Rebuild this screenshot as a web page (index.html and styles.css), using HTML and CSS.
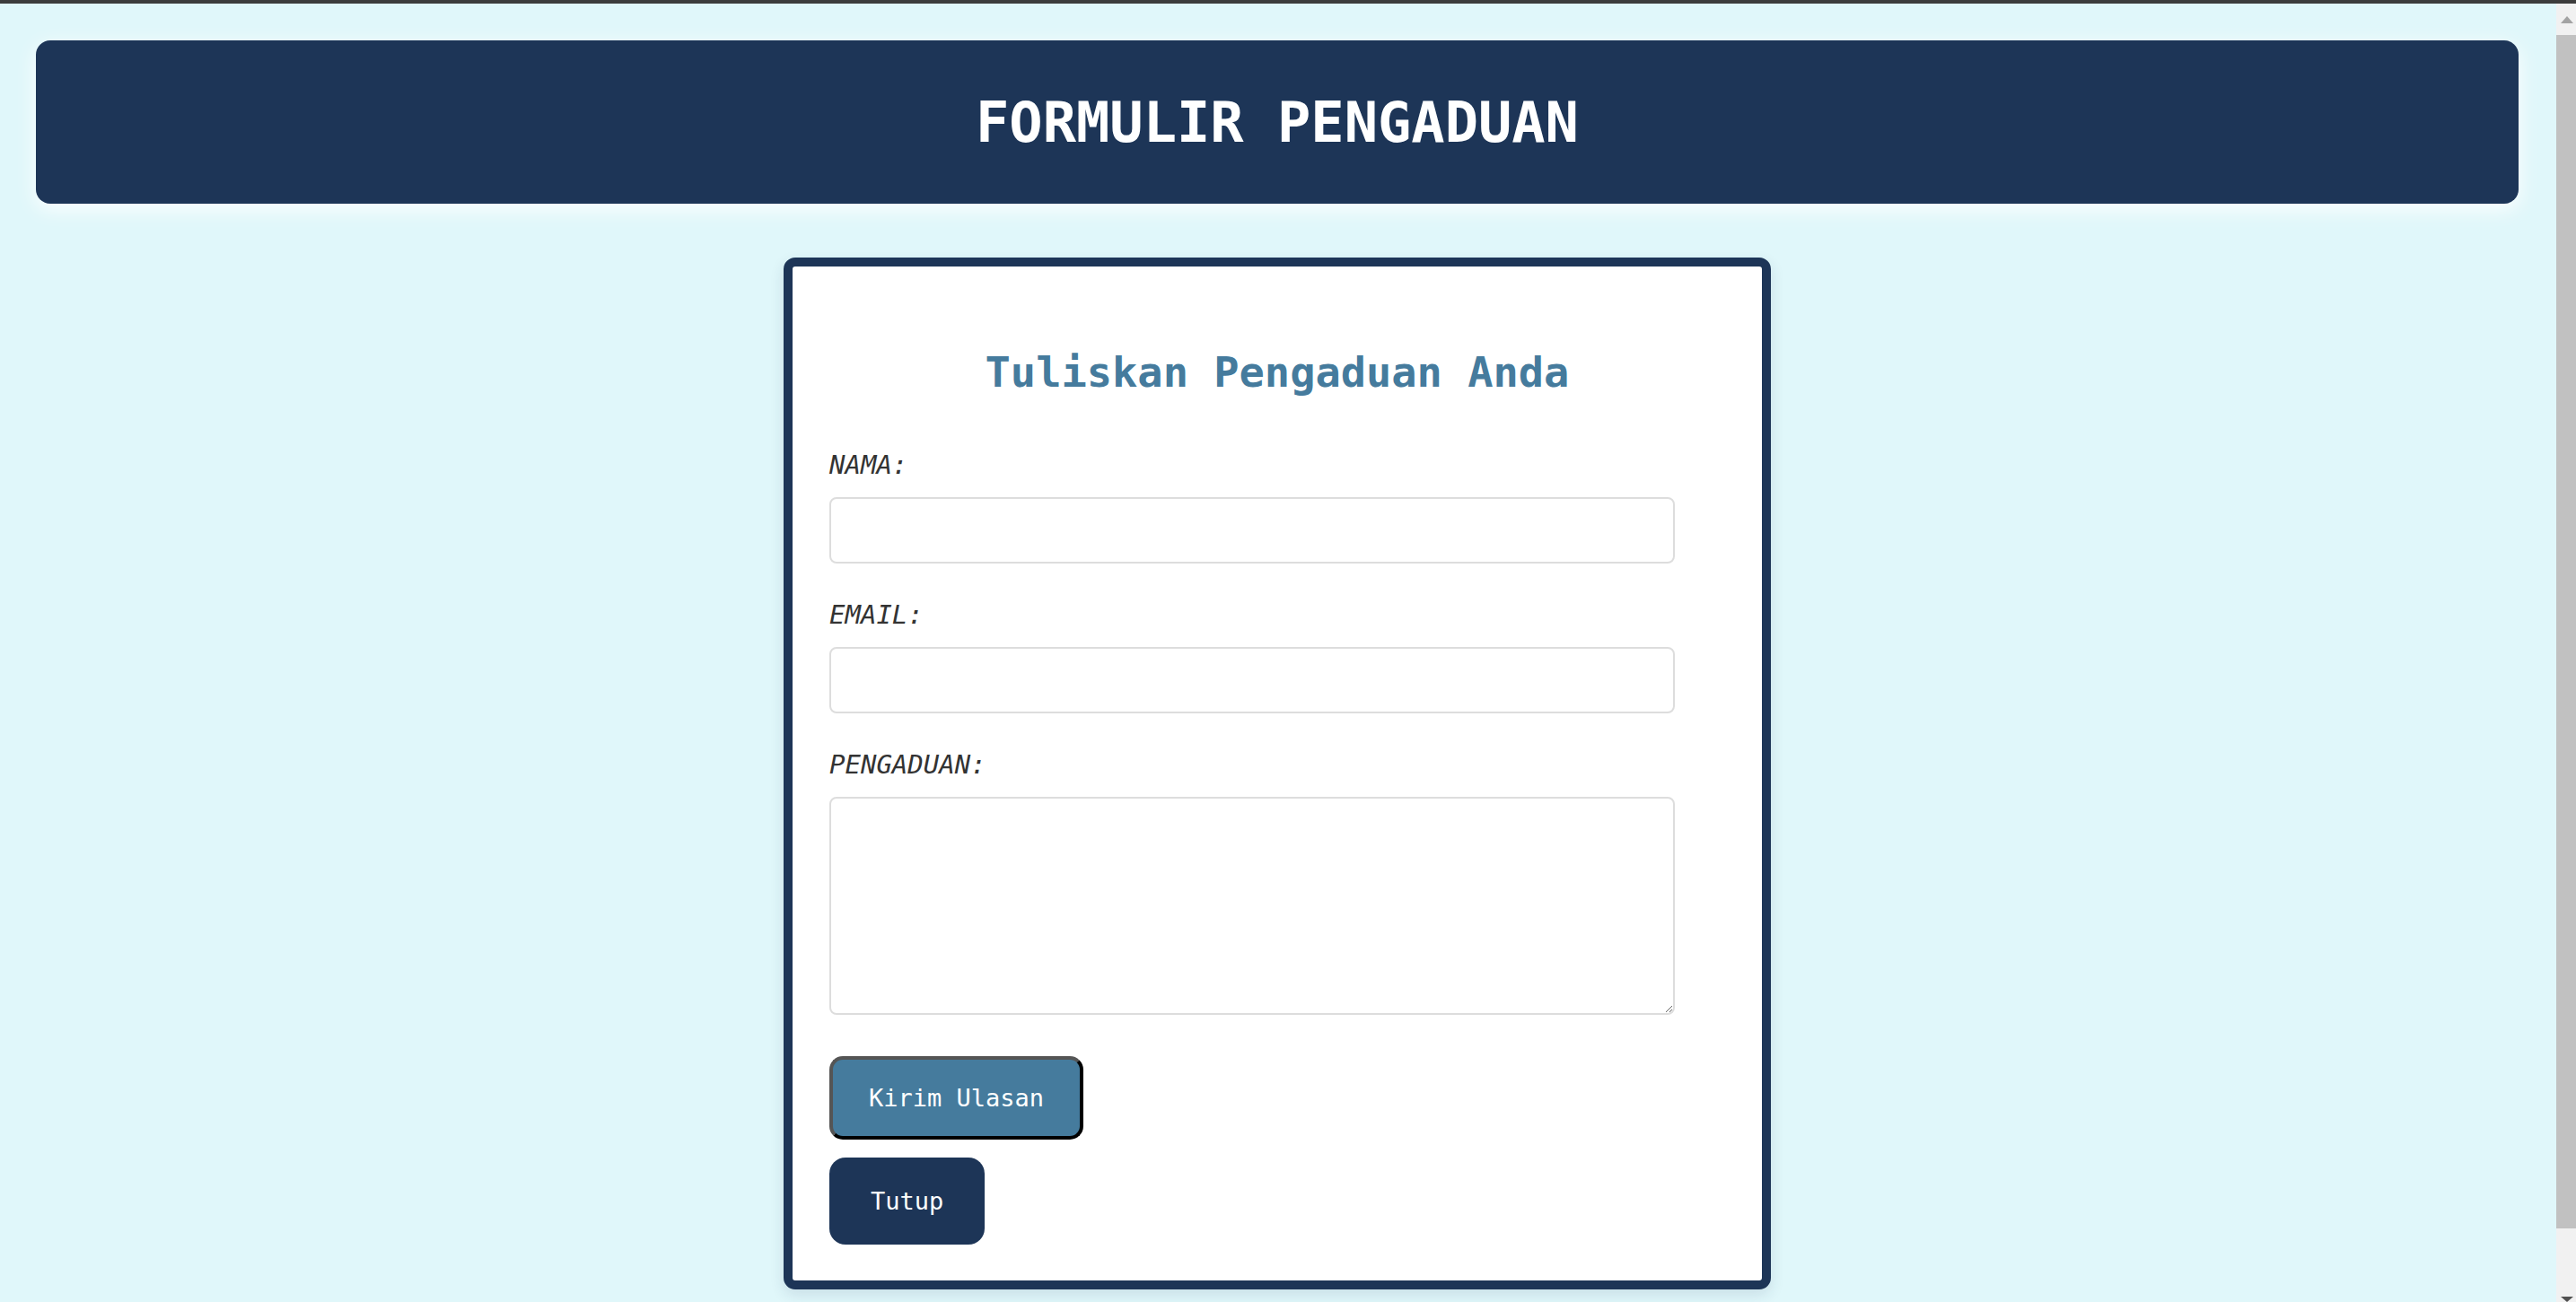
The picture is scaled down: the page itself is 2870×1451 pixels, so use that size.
FILE: index.html
```html
<!DOCTYPE html>
<html lang="id">
<head>
<meta charset="utf-8">
<title>Formulir Pengaduan</title>
<link rel="stylesheet" href="styles.css">
</head>
<body>
<div class="window-strip"></div>
<div class="viewport">
  <div class="page">
    <header class="site-header">
      <h1 class="site-title">FORMULIR PENGADUAN</h1>
    </header>
    <main class="card">
      <h2 class="card-title">Tuliskan Pengaduan Anda</h2>
      <form class="complaint-form">
        <label class="field-label" for="nama">NAMA:</label>
        <input class="field-input" type="text" id="nama">
        <label class="field-label" for="email">EMAIL:</label>
        <input class="field-input" type="email" id="email">
        <label class="field-label" for="pengaduan">PENGADUAN:</label>
        <textarea class="field-textarea" id="pengaduan"></textarea>
        <button class="btn-submit" type="button">Kirim Ulasan</button>
        <button class="btn-close" type="button">Tutup</button>
      </form>
    </main>
  </div>
  <div class="scrollbar">
    <div class="scroll-arrow scroll-up"><span class="tri-up"></span></div>
    <div class="scroll-thumb"></div>
    <div class="scroll-rest"></div>
    <div class="scroll-arrow scroll-down"><span class="tri-down"></span></div>
  </div>
</div>
</body>
</html>
```

FILE: styles.css
```css
* { box-sizing: border-box; }

html, body {
  margin: 0;
  padding: 0;
  height: 100%;
  overflow: hidden;
}

body {
  background: #e0f7fa;
  font-family: "DejaVu Sans Mono", "Liberation Mono", monospace;
  display: flex;
  flex-direction: column;
}

.window-strip {
  height: 4px;
  background: #3c3c3c;
  flex: none;
}

.viewport {
  flex: 1;
  display: flex;
  min-height: 0;
}

.page {
  flex: 1;
  padding: 41px 42px 0 40px;
  overflow: hidden;
}

.site-header {
  height: 182px;
  background: #1d3557;
  border-radius: 16px;
  display: flex;
  align-items: center;
  justify-content: center;
  box-shadow: 0 6px 22px rgba(255, 255, 255, 0.95);
}

.site-title {
  margin: 0;
  color: #ffffff;
  font-size: 62px;
  font-weight: bold;
  line-height: normal;
}

.card {
  width: 1100px;
  margin: 60px auto 0;
  background: #ffffff;
  border: 10px solid #1d3557;
  border-radius: 13px;
  padding: 90px 41px 40px 41px;
  box-shadow: 0 6px 16px rgba(29, 53, 87, 0.12);
}

.card-title {
  margin: 0 0 59px;
  text-align: center;
  color: #457b9d;
  font-size: 47px;
  font-weight: bold;
  line-height: normal;
}

.complaint-form {
  display: flex;
  flex-direction: column;
  align-items: flex-start;
}

.field-label {
  display: block;
  font-style: italic;
  font-size: 29px;
  color: #333333;
  line-height: normal;
  margin-bottom: 19px;
}

.field-input {
  width: 942px;
  height: 74px;
  border: 2px solid #dddddd;
  border-radius: 8px;
  background: #ffffff;
  margin: 0 0 40px;
  font-family: inherit;
  font-size: 24px;
  padding: 10px 14px;
}

.field-textarea {
  width: 942px;
  height: 243px;
  border: 2px solid #dddddd;
  border-radius: 8px;
  background: #ffffff;
  margin: 0 0 46px;
  font-family: inherit;
  font-size: 24px;
  padding: 10px 14px;
  resize: vertical;
}

.btn-submit {
  font-family: inherit;
  font-size: 27px;
  line-height: 31px;
  color: #ffffff;
  background: #457b9d;
  padding: 27px 40px;
  border-width: 4px;
  border-style: solid;
  border-color: #555555 #000000 #000000 #555555;
  border-radius: 15px;
  margin: 0 0 20px;
  cursor: pointer;
}

.btn-close {
  font-family: inherit;
  font-size: 27px;
  line-height: 31px;
  color: #ffffff;
  background: #1d3557;
  padding: 33px 46px;
  border: none;
  border-radius: 18px;
  margin: 0;
  cursor: pointer;
}

.scrollbar {
  width: 22px;
  flex: none;
  background: #f1f1f1;
  display: flex;
  flex-direction: column;
}

.scroll-arrow {
  height: 35px;
  display: flex;
  justify-content: center;
  align-items: center;
  flex: none;
}

.scroll-down {
  height: 82px;
  align-items: flex-end;
}

.tri-up {
  width: 0;
  height: 0;
  border-left: 7px solid transparent;
  border-right: 7px solid transparent;
  border-bottom: 8px solid #a3a3a3;
  margin-left: 2px;
}

.tri-down {
  width: 0;
  height: 0;
  border-left: 7px solid transparent;
  border-right: 7px solid transparent;
  border-top: 6px solid #505050;
  margin-left: 2px;
}

.scroll-thumb {
  height: 1330px;
  background: #c1c1c1;
  flex: none;
}

.scroll-rest {
  flex: 1;
}
```
